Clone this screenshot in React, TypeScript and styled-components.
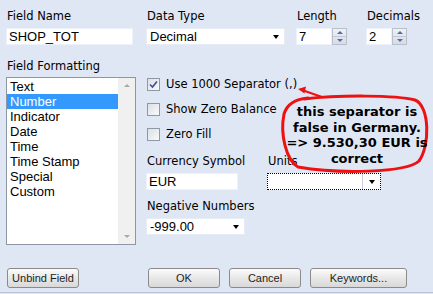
import React from 'react';
import styled, { createGlobalStyle } from 'styled-components';

const GlobalStyle = createGlobalStyle`
  html, body {
    margin: 0;
    padding: 0;
    background: #dfe7f5;
  }
`;

const StyledPage = styled.div`
  position: relative;
  box-sizing: border-box;
  width: 433px;
  height: 293px;
  padding: 8px 0 0 6px;
  background: #dfe7f5;
  border-bottom: 1px solid #b9c4d8;
  font-family: 'DejaVu Sans', Verdana, sans-serif;
  color: #000;
`;

const StyledTopRow = styled.div`
  display: grid;
  grid-template-columns: 140px 150px 70px auto;
`;

const StyledField = styled.div<{ $top?: number }>`
  display: flex;
  flex-direction: column;
  align-items: flex-start;
  margin-top: ${(p) => p.$top ?? 0}px;
`;

const StyledLabel = styled.div`
  font-size: 11.5px;
  line-height: 16px;
  height: 16px;
  padding-left: 1px;
  margin-bottom: 4px;
  white-space: nowrap;
`;

const StyledInput = styled.div<{ $w: number }>`
  box-sizing: border-box;
  width: ${(p) => p.$w}px;
  height: 17px;
  background: #fff;
  border: 1px solid #edf1f9;
  padding-left: 2px;
  font-family: 'Liberation Sans', Arial, sans-serif;
  font-size: 13px;
  line-height: 15px;
  white-space: nowrap;
`;

const StyledSelect = styled.div<{ $w: number; $focused?: boolean }>`
  box-sizing: border-box;
  width: ${(p) => p.$w}px;
  height: 17px;
  display: flex;
  align-items: stretch;
  background: #fff;
  border: 1px ${(p) => (p.$focused ? 'dotted #000' : 'solid #e6ebf4')};
  font-family: 'Liberation Sans', Arial, sans-serif;
  font-size: 13px;
  line-height: 15px;
`;

const StyledSelectValue = styled.div`
  flex: 1;
  padding-left: 3px;
  white-space: nowrap;
`;

const StyledSelectButton = styled.div<{ $divider?: boolean }>`
  width: 17px;
  display: flex;
  align-items: center;
  justify-content: center;
  border-left: ${(p) => (p.$divider ? '1px solid #c9d0dc' : 'none')};
  &::after {
    content: '';
    border-left: 3.5px solid transparent;
    border-right: 3.5px solid transparent;
    border-top: 4px solid #000;
  }
`;

const StyledSpinField = styled.div`
  display: flex;
  height: 17px;
`;

const StyledSpinner = styled.div`
  box-sizing: border-box;
  width: 15px;
  height: 17px;
  display: flex;
  flex-direction: column;
  border: 1px solid #b8c0cc;
  background: linear-gradient(#eef1f6, #d6dce6);
`;

const StyledSpinHalf = styled.div<{ $down?: boolean }>`
  flex: 1;
  display: flex;
  align-items: center;
  justify-content: center;
  border-top: ${(p) => (p.$down ? '1px solid #c3cad6' : 'none')};
  &::after {
    content: '';
    border-left: 3px solid transparent;
    border-right: 3px solid transparent;
    ${(p) =>
      p.$down ? 'border-top: 3px solid #5a6aa8;' : 'border-bottom: 3px solid #5a6aa8;'}
  }
`;

const StyledMiddle = styled.div`
  display: grid;
  grid-template-columns: 140px auto;
  margin-top: 13px;
`;

const StyledList = styled.div`
  box-sizing: border-box;
  width: 130px;
  height: 168px;
  display: flex;
  background: #fff;
  border: 1px solid #8d96a4;
`;

const StyledListItems = styled.div`
  flex: 1;
  padding-top: 1px;
  font-family: 'Liberation Sans', Arial, sans-serif;
  font-size: 13px;
`;

const StyledListItem = styled.div<{ $selected?: boolean }>`
  height: 15px;
  line-height: 15px;
  padding-left: 3px;
  background: ${(p) => (p.$selected ? '#3399ff' : 'transparent')};
  color: ${(p) => (p.$selected ? '#fff' : '#000')};
`;

const StyledScrollbar = styled.div`
  width: 17px;
  display: flex;
  flex-direction: column;
  justify-content: space-between;
  align-items: center;
  background: #f0f0f0;
  padding: 6px 0;
  box-sizing: border-box;
`;

const StyledScrollArrow = styled.div<{ $down?: boolean }>`
  border-left: 3px solid transparent;
  border-right: 3px solid transparent;
  ${(p) => (p.$down ? 'border-top: 3px solid #a8a8a8;' : 'border-bottom: 3px solid #a8a8a8;')}
`;

const StyledOptions = styled.div`
  display: flex;
  flex-direction: column;
  padding-top: 19px;
`;

const StyledCheckRow = styled.div<{ $top?: number }>`
  display: flex;
  align-items: center;
  height: 14px;
  margin-top: ${(p) => p.$top ?? 0}px;
  padding-left: 1px;
  font-size: 11.5px;
  white-space: nowrap;
`;

const StyledCheckbox = styled.span`
  box-sizing: border-box;
  width: 13px;
  height: 13px;
  margin-right: 6px;
  display: inline-flex;
  align-items: center;
  justify-content: center;
  border: 1px solid #8f98a6;
  background: linear-gradient(135deg, #dcdfe4, #f8f9fb);
`;

const StyledPairRow = styled.div`
  display: grid;
  grid-template-columns: 121px auto;
  margin-top: 12px;
`;

const StyledButtons = styled.div`
  display: grid;
  grid-template-columns: 140px auto;
  margin-top: 23px;
`;

const StyledButtonGroup = styled.div`
  display: flex;
  gap: 8px;
  padding-left: 1px;
`;

const StyledButton = styled.div<{ $w: number }>`
  box-sizing: border-box;
  width: ${(p) => p.$w}px;
  height: 20px;
  margin-left: 1px;
  display: flex;
  align-items: center;
  justify-content: center;
  border: 1px solid #8a8a8a;
  border-radius: 3px;
  background: linear-gradient(#fbfbfb, #e6e6e6 55%, #d9d9d9);
  font-family: 'Liberation Sans', Arial, sans-serif;
  font-size: 11px;
  color: #1e1e1e;
`;

const StyledNote = styled.div`
  position: absolute;
  left: 278px;
  top: 84px;
  width: 155px;
  height: 92px;
`;

const StyledNoteText = styled.div`
  position: absolute;
  left: 0;
  top: 20px;
  width: 158px;
  text-align: center;
  font-family: 'DejaVu Sans', Verdana, sans-serif;
  font-weight: bold;
  font-size: 13px;
  line-height: 15.5px;
  white-space: nowrap;
`;

const items = ['Text', 'Number', 'Indicator', 'Date', 'Time', 'Time Stamp', 'Special', 'Custom'];

const Select = ({ w, value, focused }: { w: number; value?: string; focused?: boolean }) => (
  <StyledSelect $w={w} $focused={focused}>
    <StyledSelectValue>{value}</StyledSelectValue>
    <StyledSelectButton $divider={focused} />
  </StyledSelect>
);

const Spin = ({ w, value }: { w: number; value: string }) => (
  <StyledSpinField>
    <StyledInput $w={w}>{value}</StyledInput>
    <StyledSpinner>
      <StyledSpinHalf />
      <StyledSpinHalf $down />
    </StyledSpinner>
  </StyledSpinField>
);

const Check = ({ checked }: { checked?: boolean }) => (
  <StyledCheckbox>
    {checked && (
      <svg width="9" height="9" viewBox="0 0 9 9">
        <path d="M1 4.5 L3.5 7 L8 1.5" stroke="#3a4f9a" strokeWidth="1.6" fill="none" />
      </svg>
    )}
  </StyledCheckbox>
);

const App = () => {
  return (
    <StyledPage>
      <GlobalStyle />
      <StyledTopRow>
        <StyledField>
          <StyledLabel>Field Name</StyledLabel>
          <StyledInput $w={127}>SHOP_TOT</StyledInput>
        </StyledField>
        <StyledField>
          <StyledLabel>Data Type</StyledLabel>
          <Select w={139} value="Decimal" />
        </StyledField>
        <StyledField>
          <StyledLabel>Length</StyledLabel>
          <Spin w={36} value="7" />
        </StyledField>
        <StyledField>
          <StyledLabel>Decimals</StyledLabel>
          <Spin w={26} value="2" />
        </StyledField>
      </StyledTopRow>

      <StyledMiddle>
        <StyledField>
          <StyledLabel style={{ marginBottom: 3 }}>Field Formatting</StyledLabel>
          <StyledList>
            <StyledListItems>
              {items.map((item) => (
                <StyledListItem key={item} $selected={item === 'Number'}>
                  {item}
                </StyledListItem>
              ))}
            </StyledListItems>
            <StyledScrollbar>
              <StyledScrollArrow />
              <StyledScrollArrow $down />
            </StyledScrollbar>
          </StyledList>
        </StyledField>

        <StyledOptions>
          <StyledCheckRow>
            <Check checked />
            Use 1000 Separator (,)
          </StyledCheckRow>
          <StyledCheckRow $top={11}>
            <Check />
            Show Zero Balance
          </StyledCheckRow>
          <StyledCheckRow $top={11}>
            <Check />
            Zero Fill
          </StyledCheckRow>
          <StyledPairRow>
            <StyledField>
              <StyledLabel>Currency Symbol</StyledLabel>
              <StyledInput $w={92}>EUR</StyledInput>
            </StyledField>
            <StyledField>
              <StyledLabel>Units</StyledLabel>
              <Select w={114} focused />
            </StyledField>
          </StyledPairRow>
          <StyledField $top={8}>
            <StyledLabel>Negative Numbers</StyledLabel>
            <Select w={99} value="-999.00" />
          </StyledField>
        </StyledOptions>
      </StyledMiddle>

      <StyledButtons>
        <StyledButton $w={72}>Unbind Field</StyledButton>
        <StyledButtonGroup>
          <StyledButton $w={72}>OK</StyledButton>
          <StyledButton $w={72}>Cancel</StyledButton>
          <StyledButton $w={97}>Keywords...</StyledButton>
        </StyledButtonGroup>
      </StyledButtons>

      <StyledNote>
        <svg width="155" height="92" viewBox="0 0 155 92">
          <path
            d="M26 15 C60 11, 118 11, 137 16 C152 22, 152 62, 141 77 C128 89, 60 90, 20 83 C8 76, 2 50, 6 30 C9 20, 18 15, 30 14"
            stroke="#ee1111"
            strokeWidth="3"
            fill="none"
            strokeLinecap="round"
          />
          <path d="M44 13 L24 6" stroke="#ee1111" strokeWidth="2" fill="none" />
          <path d="M20 5 L28 2.5 L26.5 9.5 Z" fill="#ee1111" />
        </svg>
        <StyledNoteText>
          this separator is
          <br />
          false in Germany.
          <br />
          =&gt; 9.530,30 EUR is
          <br />
          correct
        </StyledNoteText>
      </StyledNote>
    </StyledPage>
  );
};

export default App;
